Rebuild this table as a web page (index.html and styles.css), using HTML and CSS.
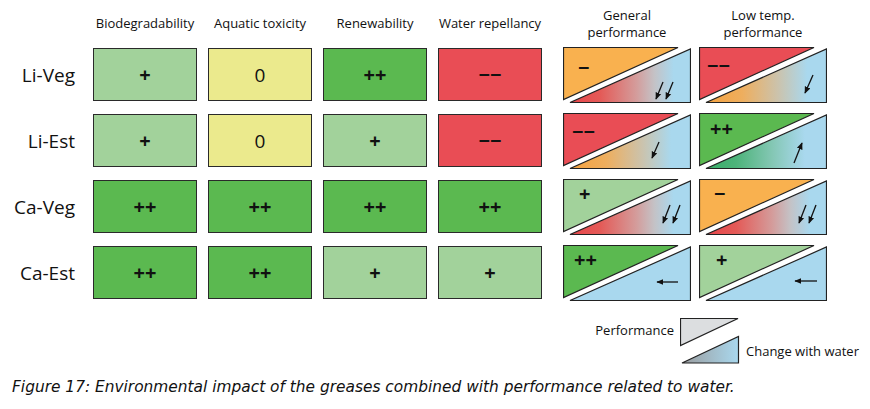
FILE: index.html
```html
<!DOCTYPE html>
<html>
<head>
<meta charset="utf-8">
<link rel="stylesheet" href="styles.css">
</head>
<body>
<svg class="defs" width="0" height="0">
  <defs>
    <linearGradient id="g-red" x1="0" y1="0" x2="1" y2="0">
      <stop offset="0" stop-color="#e8464b"/>
      <stop offset="0.25" stop-color="#e45a57"/>
      <stop offset="0.55" stop-color="#d49c9b"/>
      <stop offset="0.7" stop-color="#c4c2c6"/>
      <stop offset="0.86" stop-color="#a9d8ee"/>
      <stop offset="1" stop-color="#a9d8ee"/>
    </linearGradient>
    <linearGradient id="g-orange" x1="0" y1="0" x2="1" y2="0">
      <stop offset="0" stop-color="#f5a23f"/>
      <stop offset="0.3" stop-color="#eeae5e"/>
      <stop offset="0.6" stop-color="#cbc3ad"/>
      <stop offset="0.84" stop-color="#a9d8ee"/>
      <stop offset="1" stop-color="#a9d8ee"/>
    </linearGradient>
    <linearGradient id="g-green" x1="0" y1="0" x2="1" y2="0">
      <stop offset="0" stop-color="#38ad68"/>
      <stop offset="0.25" stop-color="#4db37a"/>
      <stop offset="0.55" stop-color="#84c7b4"/>
      <stop offset="0.82" stop-color="#a9d8ee"/>
      <stop offset="1" stop-color="#a9d8ee"/>
    </linearGradient>
    <linearGradient id="g-legend" x1="0" y1="0" x2="1" y2="0">
      <stop offset="0" stop-color="#9a9c9e"/>
      <stop offset="1" stop-color="#a9d8ee"/>
    </linearGradient>
    <marker id="ah" viewBox="0 0 10 10" refX="9" refY="5" markerWidth="7" markerHeight="7" markerUnits="userSpaceOnUse" orient="auto">
      <path d="M0,0.8 L10,5 L0,9.2 z" fill="#111"/>
    </marker>
  </defs>
</svg>
<div class="figure">
  <div class="grid">
    <div class="corner"></div>
    <div class="head">Biodegradability</div>
    <div class="head">Aquatic toxicity</div>
    <div class="head">Renewability</div>
    <div class="head">Water repellancy</div>
    <div class="head2">General<br>performance</div>
    <div class="head2">Low temp.<br>performance</div>

    <div class="label">Li-Veg</div>
    <div class="cell lg">+</div>
    <div class="cell ye zero">0</div>
    <div class="cell dg">++</div>
    <div class="cell rd">−−</div>
    <svg class="dcell" viewBox="0 0 128 56" width="128" height="56">
      <polygon class="up or" points="0.5,0.5 115,0.5 0.5,52.5"/>
      <polygon class="lo" fill="url(#g-red)" points="7,55.5 127.5,55.5 127.5,2"/>
      <text class="sym" x="15" y="20">−</text>
      <line class="arr" x1="100" y1="35" x2="93" y2="52"/>
      <line class="arr" x1="110" y1="35" x2="103" y2="52"/>
    </svg>
    <svg class="dcell" viewBox="0 0 128 56" width="128" height="56">
      <polygon class="up rdf" points="0.5,0.5 115,0.5 0.5,52.5"/>
      <polygon class="lo" fill="url(#g-orange)" points="7,55.5 127.5,55.5 127.5,2"/>
      <text class="sym" x="8" y="18">−−</text>
      <line class="arr" x1="114" y1="28" x2="106" y2="46"/>
    </svg>

    <div class="label">Li-Est</div>
    <div class="cell lg">+</div>
    <div class="cell ye zero">0</div>
    <div class="cell lg">+</div>
    <div class="cell rd">−−</div>
    <svg class="dcell" viewBox="0 0 128 56" width="128" height="56">
      <polygon class="up rdf" points="0.5,0.5 115,0.5 0.5,52.5"/>
      <polygon class="lo" fill="url(#g-orange)" points="7,55.5 127.5,55.5 127.5,2"/>
      <text class="sym" x="9" y="18">−−</text>
      <line class="arr" x1="96" y1="29" x2="89" y2="45"/>
    </svg>
    <svg class="dcell" viewBox="0 0 128 56" width="128" height="56">
      <polygon class="up dgf" points="0.5,0.5 115,0.5 0.5,52.5"/>
      <polygon class="lo" fill="url(#g-green)" points="7,55.5 127.5,55.5 127.5,2"/>
      <text class="sym" x="11" y="15">++</text>
      <line class="arr" x1="95" y1="50" x2="103" y2="30"/>
    </svg>

    <div class="label">Ca-Veg</div>
    <div class="cell dg">++</div>
    <div class="cell dg">++</div>
    <div class="cell dg">++</div>
    <div class="cell dg">++</div>
    <svg class="dcell" viewBox="0 0 128 56" width="128" height="56">
      <polygon class="up lgf" points="0.5,0.5 115,0.5 0.5,52.5"/>
      <polygon class="lo" fill="url(#g-red)" points="7,55.5 127.5,55.5 127.5,2"/>
      <text class="sym" x="16" y="14">+</text>
      <line class="arr" x1="107" y1="26" x2="100" y2="44"/>
      <line class="arr" x1="117" y1="26" x2="110" y2="44"/>
    </svg>
    <svg class="dcell" viewBox="0 0 128 56" width="128" height="56">
      <polygon class="up or" points="0.5,0.5 115,0.5 0.5,52.5"/>
      <polygon class="lo" fill="url(#g-red)" points="7,55.5 127.5,55.5 127.5,2"/>
      <text class="sym" x="15" y="14">−</text>
      <line class="arr" x1="107" y1="26" x2="100" y2="44"/>
      <line class="arr" x1="117" y1="26" x2="110" y2="44"/>
    </svg>

    <div class="label">Ca-Est</div>
    <div class="cell dg">++</div>
    <div class="cell dg">++</div>
    <div class="cell lg">+</div>
    <div class="cell lg">+</div>
    <svg class="dcell" viewBox="0 0 128 56" width="128" height="56">
      <polygon class="up dgf" points="0.5,0.5 115,0.5 0.5,52.5"/>
      <polygon class="lo bl" points="7,55.5 127.5,55.5 127.5,2"/>
      <text class="sym" x="11" y="14">++</text>
      <line class="arr" x1="115" y1="37" x2="94" y2="37"/>
    </svg>
    <svg class="dcell" viewBox="0 0 128 56" width="128" height="56">
      <polygon class="up lgf" points="0.5,0.5 115,0.5 0.5,52.5"/>
      <polygon class="lo bl" points="7,55.5 127.5,55.5 127.5,2"/>
      <text class="sym" x="17" y="14">+</text>
      <line class="arr" x1="118" y1="36" x2="96" y2="36"/>
    </svg>
  </div>

  <div class="legend">
    <span class="leg-perf">Performance</span>
    <svg class="leg-icon" viewBox="0 0 60 46" width="60" height="46">
      <polygon points="0.5,0.5 58,0.5 0.5,27.5" fill="#dcdee0" stroke="#222" stroke-width="1.2"/>
      <polygon points="2,45 58.5,45 58.5,18.5" fill="url(#g-legend)" stroke="#222" stroke-width="1.2"/>
    </svg>
    <span class="leg-water">Change with water</span>
  </div>

  <p class="caption">Figure 17: Environmental impact of the greases combined with performance related to water.</p>
</div>
</body>
</html>
```

FILE: styles.css
```css
html, body {
  margin: 0;
  padding: 0;
  background: #ffffff;
}

.defs {
  display: block;
  width: 0;
  height: 0;
  overflow: hidden;
}

.figure {
  width: 870px;
  height: 409px;
  font-family: "Open Sans", "Noto Sans", sans-serif;
  color: #111;
}

.grid {
  display: grid;
  grid-template-columns: 93px 115px 115px 115px 125px 136px 128px;
  grid-template-rows: 36px repeat(4, 55px);
  row-gap: 11px;
}

.head {
  width: 104px;
  align-self: start;
  text-align: center;
  font-size: 13px;
  line-height: 17px;
  padding-top: 15px;
  white-space: nowrap;
}

.head2 {
  width: 128px;
  align-self: start;
  text-align: center;
  font-size: 13px;
  line-height: 17px;
  padding-top: 7px;
}

.label {
  align-self: center;
  text-align: right;
  padding-right: 18px;
  font-size: 19px;
  line-height: 24px;
}

.cell {
  box-sizing: border-box;
  width: 104px;
  height: 53px;
  align-self: center;
  border: 1px solid #2a2a2a;
  display: flex;
  align-items: center;
  justify-content: center;
  font-size: 20px;
  font-weight: 700;
  color: #111;
}

.zero {
  font-weight: 400;
  font-size: 19px;
}

.lg { background: #a2d29b; }
.ye { background: #ebea8d; }
.dg { background: #5bb950; }
.rd { background: #e94d55; }

.dcell {
  display: block;
  align-self: center;
}

.up, .lo {
  stroke: #222;
  stroke-width: 1.2;
}

.or { fill: #f9b14f; }
.rdf { fill: #e94d55; }
.dgf { fill: #5bb950; }
.lgf { fill: #a2d29b; }
.bl { fill: #a9d8ee; }

.sym {
  font-family: "Open Sans", "Noto Sans", sans-serif;
  font-size: 20px;
  font-weight: 700;
  fill: #111;
  dominant-baseline: central;
}

.arr {
  stroke: #111;
  stroke-width: 1.3;
  marker-end: url(#ah);
}

.legend {
  display: flex;
  margin-top: 18px;
  margin-left: 586px;
  font-size: 13px;
  line-height: 17px;
}

.leg-perf {
  width: 88px;
  text-align: right;
  margin-right: 6px;
  padding-top: 4px;
}

.leg-icon {
  display: block;
}

.leg-water {
  margin-left: 6px;
  padding-top: 25px;
}

.caption {
  margin: 14px 0 0 12px;
  font-family: "DejaVu Sans", "Verdana", sans-serif;
  font-style: italic;
  font-size: 15.4px;
  line-height: 18px;
  color: #111;
}
```
